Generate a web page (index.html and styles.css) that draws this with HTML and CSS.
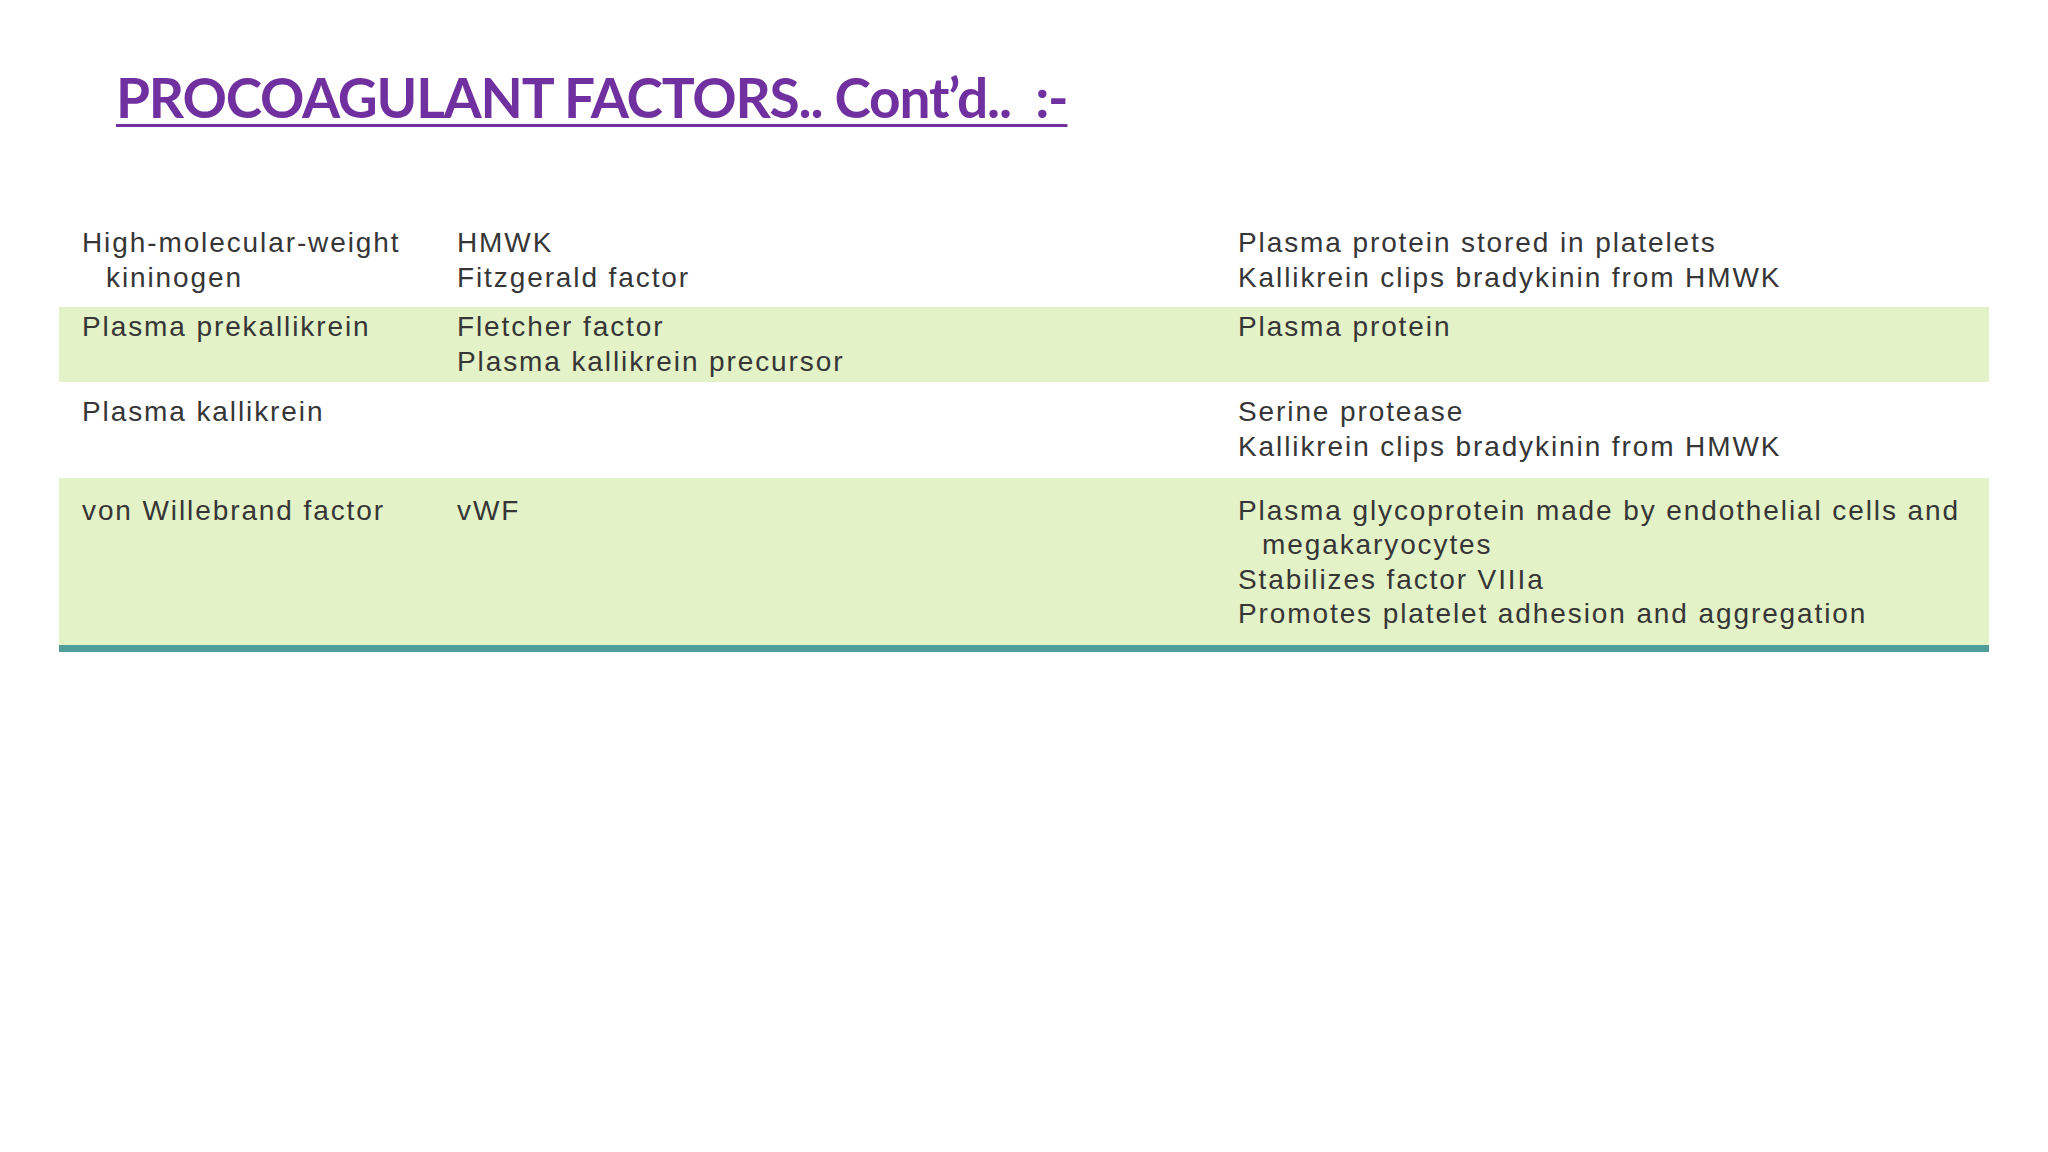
FILE: index.html
```html
<!DOCTYPE html>
<html>
<head>
<meta charset="utf-8">
<link rel="stylesheet" href="styles.css">
</head>
<body>
<div class="slide">
  <h1 class="title">PROCOAGULANT FACTORS.. Cont’d..&nbsp; :-</h1>
  <div class="table">
    <div class="row r1">
      <div class="cell"><div>High-molecular-weight</div><div class="ind">kininogen</div></div>
      <div class="cell"><div>HMWK</div><div>Fitzgerald factor</div></div>
      <div class="cell"><div>Plasma protein stored in platelets</div><div>Kallikrein clips bradykinin from HMWK</div></div>
    </div>
    <div class="row r2 green">
      <div class="cell"><div>Plasma prekallikrein</div></div>
      <div class="cell"><div>Fletcher factor</div><div>Plasma kallikrein precursor</div></div>
      <div class="cell"><div>Plasma protein</div></div>
    </div>
    <div class="row r3">
      <div class="cell"><div>Plasma kallikrein</div></div>
      <div class="cell"></div>
      <div class="cell"><div>Serine protease</div><div>Kallikrein clips bradykinin from HMWK</div></div>
    </div>
    <div class="row r4 green">
      <div class="cell"><div>von Willebrand factor</div></div>
      <div class="cell"><div>vWF</div></div>
      <div class="cell"><div>Plasma glycoprotein made by endothelial cells and</div><div class="ind">megakaryocytes</div><div>Stabilizes factor VIIIa</div><div>Promotes platelet adhesion and aggregation</div></div>
    </div>
  </div>
</div>
</body>
</html>
```

FILE: styles.css
```css
html, body {
  margin: 0;
  padding: 0;
  background: #ffffff;
}
.slide {
  width: 2048px;
  height: 1152px;
  overflow: hidden;
  padding-top: 64px;
  box-sizing: border-box;
}
.title {
  margin: 0 0 0 116px;
  font-family: "Lato", "Liberation Sans", sans-serif;
  font-weight: 700;
  font-size: 55px;
  line-height: 1.2;
  color: #7030a0;
  text-decoration: underline;
  text-decoration-thickness: 3px;
  text-underline-offset: 6px;
  letter-spacing: -1.2px;
  white-space: nowrap;
}
.table {
  margin: 84px 0 0 59px;
  width: 1930px;
  border-bottom: 7px solid #4f9e99;
  font-family: "Liberation Sans", Arial, sans-serif;
  font-size: 28px;
  line-height: 34.6px;
  color: #363636;
  letter-spacing: 1.9px;
}
.row {
  display: grid;
  grid-template-columns: 375px 781px 1fr;
  padding-left: 23px;
}
.green {
  background: #e4f2c8;
}
.r1 { padding-top: 12px; padding-bottom: 12px; }
.r2 { padding-top: 3px; padding-bottom: 3px; }
.r3 { padding-top: 13px; padding-bottom: 13px; }
.r4 { padding-top: 16px; padding-bottom: 13px; }
.cell div {
  white-space: nowrap;
}
.cell .ind {
  padding-left: 24px;
}
```
